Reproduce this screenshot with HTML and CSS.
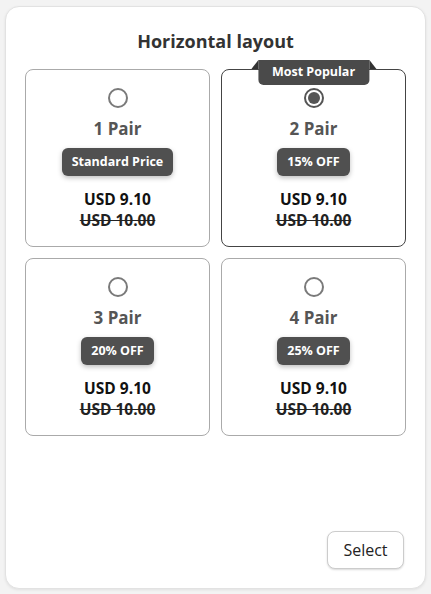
FILE: index.html
```html
<!DOCTYPE html>
<html>
<head>
  <title>Horizontal layout</title>
  <link rel="stylesheet" href="styles.css">
</head>
<body>
  <div class="panel">
    <h1>Horizontal layout</h1>

    <div class="options">
      <div class="option">
        <span class="radio"></span>
        <div class="qty">1 Pair</div>
        <div class="badge">Standard Price</div>
        <div class="price">USD 9.10</div>
        <div class="old-price">USD 10.00</div>
      </div>
      <div class="option selected">
        <div class="popular">Most Popular</div>
        <span class="radio"></span>
        <div class="qty">2 Pair</div>
        <div class="badge">15% OFF</div>
        <div class="price">USD 9.10</div>
        <div class="old-price">USD 10.00</div>
      </div>
      <div class="option">
        <span class="radio"></span>
        <div class="qty">3 Pair</div>
        <div class="badge">20% OFF</div>
        <div class="price">USD 9.10</div>
        <div class="old-price">USD 10.00</div>
      </div>
      <div class="option">
        <span class="radio"></span>
        <div class="qty">4 Pair</div>
        <div class="badge">25% OFF</div>
        <div class="price">USD 9.10</div>
        <div class="old-price">USD 10.00</div>
      </div>
    </div>

    <div class="actions">
      <button class="select-button">Select</button>
    </div>
  </div>
</body>
</html>
```

FILE: styles.css
```css
body {
  margin: 0;
  padding: 6px 5px;
  background-color: #f3f3f3;
  font-family: "Open Sans", "Noto Sans", sans-serif;
  color: #333;
}

.panel {
  box-sizing: border-box;
  height: 583px;
  background-color: #fff;
  border: 1px solid #e2e2e2;
  border-radius: 14px;
  box-shadow: 0 1px 3px rgba(0, 0, 0, 0.08);
  padding: 22px 19px 19px 19px;
  display: flex;
  flex-direction: column;
}

h1 {
  margin: 0 0 16px 0;
  text-align: center;
  font-size: 18px;
  line-height: 24px;
  font-weight: 700;
  color: #333;
}

.options {
  display: grid;
  grid-template-columns: 1fr 1fr;
  gap: 11px;
}

.option {
  position: relative;
  height: 178px;
  box-sizing: border-box;
  border: 1px solid #aaa;
  border-radius: 8px;
  padding-top: 18px;
  display: flex;
  flex-direction: column;
  align-items: center;
}

.option.selected {
  border-color: #444;
}

.radio {
  box-sizing: border-box;
  width: 20px;
  height: 20px;
  border: 2px solid #7a7a7a;
  border-radius: 50%;
  display: flex;
  justify-content: center;
  align-items: center;
}

.selected .radio {
  border-color: #555;
}

.selected .radio::after {
  content: "";
  width: 12px;
  height: 12px;
  border-radius: 50%;
  background-color: #555;
}

.qty {
  margin-top: 10px;
  font-size: 17px;
  line-height: 22px;
  font-weight: 700;
  color: #555;
}

.badge {
  margin-top: 8px;
  height: 28px;
  line-height: 28px;
  padding: 0 10px;
  border-radius: 6px;
  background-color: #505050;
  color: #fff;
  font-size: 12.5px;
  font-weight: 700;
  box-shadow: 0 2px 5px rgba(0, 0, 0, 0.25);
}

.price {
  margin-top: 13px;
  font-size: 15.5px;
  line-height: 20px;
  font-weight: 700;
  color: #111;
}

.old-price {
  font-size: 15.5px;
  line-height: 22px;
  font-weight: 700;
  color: #222;
  text-decoration: line-through;
}

.popular {
  position: absolute;
  top: -10px;
  left: 50%;
  transform: translateX(-50%);
  height: 25px;
  line-height: 24px;
  padding: 0 14px;
  background-color: #4a4a4a;
  color: #fff;
  font-size: 12.5px;
  font-weight: 700;
  white-space: nowrap;
  border-radius: 0 0 5px 5px;
}

.popular::before,
.popular::after {
  content: "";
  position: absolute;
  top: 0;
  width: 0;
  height: 0;
  border-bottom: 9px solid #333;
}

.popular::before {
  left: -7px;
  border-left: 7px solid transparent;
}

.popular::after {
  right: -7px;
  border-right: 7px solid transparent;
}

.actions {
  margin-top: auto;
  display: flex;
  justify-content: flex-end;
  padding-right: 2px;
}

.select-button {
  width: 77px;
  height: 38px;
  background-color: #fff;
  border: 1px solid #ccc;
  border-radius: 8px;
  box-shadow: 0 1px 2px rgba(0, 0, 0, 0.15);
  font-family: "Open Sans", "Noto Sans", sans-serif;
  font-size: 16px;
  color: #222;
  cursor: pointer;
}
```
